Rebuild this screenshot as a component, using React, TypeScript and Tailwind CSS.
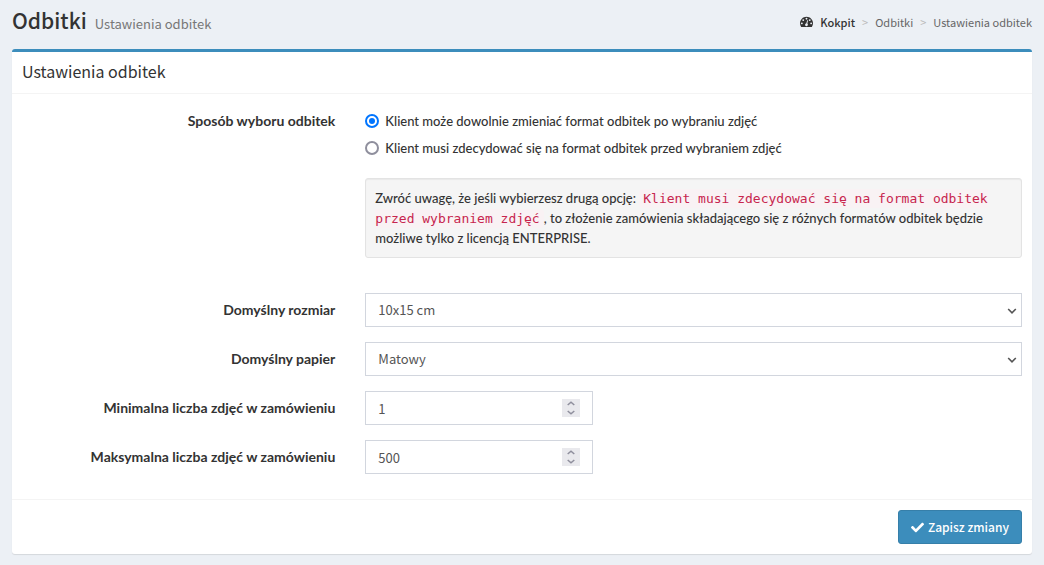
import { useState } from 'react';
import { FaCheck } from 'react-icons/fa';

const LABEL_CLASS =
  "col-span-4 pt-[7px] text-right font-['Lato',sans-serif] text-[14px] leading-5 font-bold text-[#333333]";
const CONTROL_BORDER = 'border border-[#d2d6de] bg-white focus-within:border-[#3c8dbc]';

const CHOICE_AFTER = 'Klient może dowolnie zmieniać format odbitek po wybraniu zdjęć';
const CHOICE_BEFORE = 'Klient musi zdecydować się na format odbitek przed wybraniem zdjęć';

// ---------------------------------------------------------------------------
// Icons
// ---------------------------------------------------------------------------

function DashboardIcon() {
  return (
    <svg className="h-[13px] w-[13px]" viewBox="0 0 1792 1792" fill="currentColor" aria-hidden="true">
      <path d="M384 1152q0-53-37.5-90.5t-90.5-37.5-90.5 37.5-37.5 90.5 37.5 90.5 90.5 37.5 90.5-37.5 37.5-90.5zm192-448q0-53-37.5-90.5t-90.5-37.5-90.5 37.5-37.5 90.5 37.5 90.5 90.5 37.5 90.5-37.5 37.5-90.5zm428 481l101-382q6-26-7.5-48.5t-38.5-29.5-48 6.5-30 39.5l-101 382q-60 5-107 43.5t-63 98.5q-20 77 20 146t117 89 146-20 89-117q16-60-6-117t-72-91zm660-33q0-53-37.5-90.5t-90.5-37.5-90.5 37.5-37.5 90.5 37.5 90.5 90.5 37.5 90.5-37.5 37.5-90.5zm-640-640q0-53-37.5-90.5t-90.5-37.5-90.5 37.5-37.5 90.5 37.5 90.5 90.5 37.5 90.5-37.5 37.5-90.5zm448 192q0-53-37.5-90.5t-90.5-37.5-90.5 37.5-37.5 90.5 37.5 90.5 90.5 37.5 90.5-37.5 37.5-90.5zm320 448q0 261-141 483-19 29-54 29h-1402q-35 0-54-29-141-221-141-483 0-182 71-348t191-286 286-191 348-71 348 71 286 191 191 286 71 348z" />
    </svg>
  );
}

// ---------------------------------------------------------------------------
// Form controls
// ---------------------------------------------------------------------------

function RadioRow({
  value,
  label,
  selected,
  onSelect,
}: {
  value: string;
  label: string;
  selected: string;
  onSelect: (value: string) => void;
}) {
  return (
    <label className="flex items-center gap-1.5 pt-[7px] leading-5">
      <input
        type="radio"
        name="print-mode"
        value={value}
        checked={selected === value}
        onChange={() => onSelect(value)}
        className="h-3.5 w-3.5 flex-shrink-0 appearance-none rounded-full border-2 border-[#8f8f9d] bg-white checked:border-[#0075ff] checked:bg-[#0075ff] checked:bg-clip-content checked:p-0.5"
      />
      <span>{label}</span>
    </label>
  );
}

function SelectRow({ id, label, options }: { id: string; label: string; options: string[] }) {
  return (
    <div className="grid grid-cols-12 gap-x-[30px]">
      <label htmlFor={id} className={LABEL_CLASS}>
        {label}
      </label>
      <div className={`relative col-span-8 ${CONTROL_BORDER}`}>
        <select
          id={id}
          className="block h-8 w-full appearance-none bg-transparent pr-8 pl-3 text-[13px] text-[#555555] outline-none">
          {options.map(option => (
            <option key={option}>{option}</option>
          ))}
        </select>
        <svg
          className="pointer-events-none absolute top-3 right-1 h-2.5 w-2.5"
          viewBox="0 0 10 10"
          fill="none"
          stroke="#555555"
          strokeWidth="1.6"
          aria-hidden="true">
          <path d="M1.2 3 5 6.8 8.8 3" />
        </svg>
      </div>
    </div>
  );
}

function NumberRow({ id, label, initial }: { id: string; label: string; initial: number }) {
  const [value, setValue] = useState(initial);

  return (
    <div className="grid grid-cols-12 gap-x-[30px]">
      <label htmlFor={id} className={LABEL_CLASS}>
        {label}
      </label>
      <div className={`col-span-3 flex items-center px-3 ${CONTROL_BORDER}`}>
        <input
          id={id}
          type="number"
          value={value}
          onChange={e => setValue(Number(e.target.value))}
          className="h-8 w-full min-w-0 flex-1 [appearance:textfield] text-[13px] text-[#555555] outline-none [&::-webkit-inner-spin-button]:appearance-none"
        />
        <div className="flex h-[18px] w-[18px] flex-col bg-[#e9e9ed]">
          <button
            type="button"
            aria-label="Zwiększ"
            onClick={() => setValue(value + 1)}
            className="flex h-[9px] items-center justify-center">
            <svg width="8" height="5" viewBox="0 0 8 5" fill="none" stroke="#8f8f9d" strokeWidth="1.5">
              <path d="M.7 4 4 1.2 7.3 4" />
            </svg>
          </button>
          <button
            type="button"
            aria-label="Zmniejsz"
            onClick={() => setValue(value - 1)}
            className="flex h-[9px] items-center justify-center">
            <svg width="8" height="5" viewBox="0 0 8 5" fill="none" stroke="#8f8f9d" strokeWidth="1.5">
              <path d="M.7 1 4 3.8 7.3 1" />
            </svg>
          </button>
        </div>
      </div>
    </div>
  );
}

// ---------------------------------------------------------------------------
// Page
// ---------------------------------------------------------------------------

export default function App() {
  const [mode, setMode] = useState('after');

  return (
    <div className="min-h-screen bg-[#ecf0f5] px-3 pb-3 font-['Noto_Sans_CJK_JP',sans-serif] text-[13px] leading-5 text-[#333333]">
      {/* Page header */}
      <header className="flex h-[49px] items-center justify-between pb-1.5">
        <h1 className="flex items-baseline gap-2 text-[21px] leading-6 font-medium">
          Odbitki
          <small className="text-[13px] font-normal text-[#777777]">Ustawienia odbitek</small>
        </h1>
        <nav aria-label="Breadcrumb">
          <ol className="flex items-center text-[11px] text-[#666666]">
            <li>
              <a
                href="#kokpit"
                className="flex items-center gap-[7px] font-medium text-[#333333]">
                <DashboardIcon />
                Kokpit
              </a>
            </li>
            <li className="px-[7px] text-[#bbbbbb]" aria-hidden="true">
              &gt;
            </li>
            <li>
              <a href="#odbitki">Odbitki</a>
            </li>
            <li className="px-[7px] text-[#bbbbbb]" aria-hidden="true">
              &gt;
            </li>
            <li>Ustawienia odbitek</li>
          </ol>
        </nav>
      </header>

      {/* Settings box */}
      <form
        onSubmit={e => e.preventDefault()}
        className="rounded-[3px] border-t-3 border-[#3c8dbc] bg-white shadow-[0_1px_1px_rgba(0,0,0,0.1)]">
        <div className="border-b border-[#f4f4f4] px-2.5 pt-[9px] pb-[11px]">
          <h2 className="text-[16px] leading-[21px] text-[#333333]">Ustawienia odbitek</h2>
        </div>

        <div className="flex flex-col gap-[15px] px-2.5 pt-2.5 pb-[25px]">
          <fieldset className="grid grid-cols-12 gap-x-[30px]" aria-labelledby="mode-label">
            <div id="mode-label" className={LABEL_CLASS}>
              Sposób wyboru odbitek
            </div>
            <div className="col-span-8 font-['Lato',sans-serif] font-medium">
              <RadioRow value="after" label={CHOICE_AFTER} selected={mode} onSelect={setMode} />
              <RadioRow value="before" label={CHOICE_BEFORE} selected={mode} onSelect={setMode} />
              <p className="my-5 rounded-[3px] border border-[#e3e3e3] bg-[#f5f5f5] p-[9px] shadow-[inset_0_1px_1px_rgba(0,0,0,0.05)]">
                Zwróć uwagę, że jeśli wybierzesz drugą opcję:{' '}
                <code className="rounded bg-[#f9f2f4] px-1 py-0.5 font-['DejaVu_Sans_Mono',monospace] text-[13px] leading-none text-[#c7254e]">
                  {CHOICE_BEFORE}
                </code>
                , to złożenie zamówienia składającego się z różnych formatów odbitek będzie możliwe
                tylko z licencją ENTERPRISE.
              </p>
            </div>
          </fieldset>

          <SelectRow id="size" label="Domyślny rozmiar" options={['10x15 cm', '13x18 cm', '15x21 cm']} />
          <SelectRow id="paper" label="Domyślny papier" options={['Matowy', 'Błyszczący']} />
          <NumberRow id="min" label="Minimalna liczba zdjęć w zamówieniu" initial={1} />
          <NumberRow id="max" label="Maksymalna liczba zdjęć w zamówieniu" initial={500} />
        </div>

        <div className="flex justify-end border-t border-[#f4f4f4] p-2.5">
          <button
            type="submit"
            className="flex items-center gap-1 rounded-[3px] border border-[#367fa9] bg-[#3c8dbc] px-3 py-1.5 text-[12px] leading-5 font-medium text-white hover:bg-[#367fa9]">
            <FaCheck className="h-[13px] w-[13px]" aria-hidden="true" />
            Zapisz zmiany
          </button>
        </div>
      </form>
    </div>
  );
}
